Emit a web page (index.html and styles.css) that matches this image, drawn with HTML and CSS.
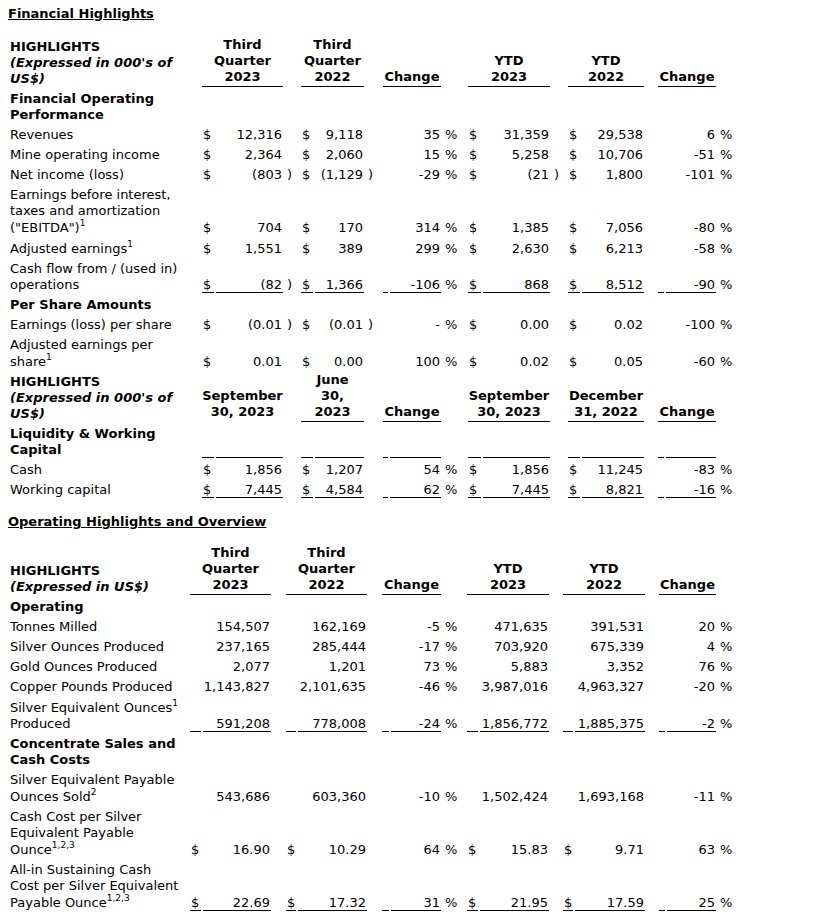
FILE: index.html
```html
<!DOCTYPE html>
<html>
<head>
<meta charset="utf-8">
<link rel="stylesheet" href="styles.css">
</head>
<body>
<div class="section-title">Financial Highlights</div>
<table class="fin t1">
<colgroup>
<col class="w192"><col class="w12"><col class="w67"><col class="w14"><col class="w12"><col class="w49"><col class="w15"><col class="w5"><col class="w51"><col class="w23"><col class="w13"><col class="w67"><col class="w14"><col class="w12"><col class="w62"><col class="w10"><col class="w6"><col class="w50"><col class="w17">
</colgroup>
<tr class="hd">
<td class="l b">HIGHLIGHTS<br><i>(Expressed in 000's of<br>US$)</i></td>
<td colspan="2" class="h u">Third<br>Quarter<br>2023</td><td></td>
<td colspan="2" class="h u">Third<br>Quarter<br>2022</td><td></td>
<td colspan="2" class="h u">Change</td><td></td>
<td colspan="2" class="h u">YTD<br>2023</td><td></td>
<td colspan="2" class="h u">YTD<br>2022</td><td></td>
<td colspan="2" class="h u">Change</td><td></td>
</tr>
<tr><td class="l b">Financial Operating<br>Performance</td><td colspan="18"></td></tr>
<tr><td class="l">Revenues</td><td class="s">$</td><td class="v">12,316</td><td></td><td class="s">$</td><td class="v">9,118</td><td></td><td></td><td class="v">35</td><td class="p">%</td><td class="s">$</td><td class="v">31,359</td><td></td><td class="s">$</td><td class="v">29,538</td><td></td><td></td><td class="v">6</td><td class="p">%</td></tr>
<tr><td class="l">Mine operating income</td><td class="s">$</td><td class="v">2,364</td><td></td><td class="s">$</td><td class="v">2,060</td><td></td><td></td><td class="v">15</td><td class="p">%</td><td class="s">$</td><td class="v">5,258</td><td></td><td class="s">$</td><td class="v">10,706</td><td></td><td></td><td class="v">-51</td><td class="p">%</td></tr>
<tr><td class="l">Net income (loss)</td><td class="s">$</td><td class="v">(803</td><td class="p">)</td><td class="s">$</td><td class="v">(1,129</td><td class="p">)</td><td></td><td class="v">-29</td><td class="p">%</td><td class="s">$</td><td class="v">(21</td><td class="p">)</td><td class="s">$</td><td class="v">1,800</td><td></td><td></td><td class="v">-101</td><td class="p">%</td></tr>
<tr><td class="l">Earnings before interest,<br>taxes and amortization<br>("EBITDA")<sup>1</sup></td><td class="s">$</td><td class="v">704</td><td></td><td class="s">$</td><td class="v">170</td><td></td><td></td><td class="v">314</td><td class="p">%</td><td class="s">$</td><td class="v">1,385</td><td></td><td class="s">$</td><td class="v">7,056</td><td></td><td></td><td class="v">-80</td><td class="p">%</td></tr>
<tr><td class="l">Adjusted earnings<sup>1</sup></td><td class="s">$</td><td class="v">1,551</td><td></td><td class="s">$</td><td class="v">389</td><td></td><td></td><td class="v">299</td><td class="p">%</td><td class="s">$</td><td class="v">2,630</td><td></td><td class="s">$</td><td class="v">6,213</td><td></td><td></td><td class="v">-58</td><td class="p">%</td></tr>
<tr><td class="l">Cash flow from / (used in)<br>operations</td><td class="s u">$</td><td class="v u">(82</td><td class="p">)</td><td class="s u">$</td><td class="v u">1,366</td><td></td><td class="s u"></td><td class="v u">-106</td><td class="p">%</td><td class="s u">$</td><td class="v u">868</td><td></td><td class="s u">$</td><td class="v u">8,512</td><td></td><td class="s u"></td><td class="v u">-90</td><td class="p">%</td></tr>
<tr><td class="l b">Per Share Amounts</td><td colspan="18"></td></tr>
<tr><td class="l">Earnings (loss) per share</td><td class="s">$</td><td class="v">(0.01</td><td class="p">)</td><td class="s">$</td><td class="v">(0.01</td><td class="p">)</td><td></td><td class="v">-</td><td class="p">%</td><td class="s">$</td><td class="v">0.00</td><td></td><td class="s">$</td><td class="v">0.02</td><td></td><td></td><td class="v">-100</td><td class="p">%</td></tr>
<tr><td class="l">Adjusted earnings per<br>share<sup>1</sup></td><td class="s">$</td><td class="v">0.01</td><td></td><td class="s">$</td><td class="v">0.00</td><td></td><td></td><td class="v">100</td><td class="p">%</td><td class="s">$</td><td class="v">0.02</td><td></td><td class="s">$</td><td class="v">0.05</td><td></td><td></td><td class="v">-60</td><td class="p">%</td></tr>
<tr class="hd">
<td class="l b">HIGHLIGHTS<br><i>(Expressed in 000's of<br>US$)</i></td>
<td colspan="2" class="h">September<br>30, 2023</td><td></td>
<td colspan="2" class="h u">June<br>30,<br>2023</td><td></td>
<td colspan="2" class="h u">Change</td><td></td>
<td colspan="2" class="h u">September<br>30, 2023</td><td></td>
<td colspan="2" class="h u">December<br>31, 2022</td><td></td>
<td colspan="2" class="h u">Change</td><td></td>
</tr>
<tr><td class="l b">Liquidity &amp; Working<br>Capital</td><td class="s u"></td><td class="v u"></td><td></td><td class="s u"></td><td class="v u"></td><td></td><td class="s u"></td><td class="v u"></td><td></td><td class="s u"></td><td class="v u"></td><td></td><td class="s u"></td><td class="v u"></td><td></td><td class="s u"></td><td class="v u"></td><td></td></tr>
<tr><td class="l">Cash</td><td class="s">$</td><td class="v">1,856</td><td></td><td class="s">$</td><td class="v">1,207</td><td></td><td></td><td class="v">54</td><td class="p">%</td><td class="s">$</td><td class="v">1,856</td><td></td><td class="s">$</td><td class="v">11,245</td><td></td><td></td><td class="v">-83</td><td class="p">%</td></tr>
<tr><td class="l">Working capital</td><td class="s u">$</td><td class="v u">7,445</td><td></td><td class="s u">$</td><td class="v u">4,584</td><td></td><td class="s u"></td><td class="v u">62</td><td class="p">%</td><td class="s u">$</td><td class="v u">7,445</td><td></td><td class="s u">$</td><td class="v u">8,821</td><td></td><td class="s u"></td><td class="v u">-16</td><td class="p">%</td></tr>
</table>

<div class="section-title second">Operating Highlights and Overview</div>
<table class="fin t2">
<colgroup>
<col class="w180"><col class="w11"><col class="w68"><col class="w11"><col class="w10"><col class="w69"><col class="w11"><col class="w7"><col class="w50"><col class="w22"><col class="w11"><col class="w69"><col class="w10"><col class="w10"><col class="w70"><col class="w10"><col class="w6"><col class="w49"><col class="w17">
</colgroup>
<tr class="hd">
<td class="l b">HIGHLIGHTS<br><i>(Expressed in US$)</i></td>
<td colspan="2" class="h u">Third<br>Quarter<br>2023</td><td></td>
<td colspan="2" class="h u">Third<br>Quarter<br>2022</td><td></td>
<td colspan="2" class="h u">Change</td><td></td>
<td colspan="2" class="h u">YTD<br>2023</td><td></td>
<td colspan="2" class="h u">YTD<br>2022</td><td></td>
<td colspan="2" class="h u">Change</td><td></td>
</tr>
<tr><td class="l b">Operating</td><td colspan="18"></td></tr>
<tr><td class="l">Tonnes Milled</td><td></td><td class="v">154,507</td><td></td><td></td><td class="v">162,169</td><td></td><td></td><td class="v">-5</td><td class="p">%</td><td></td><td class="v">471,635</td><td></td><td></td><td class="v">391,531</td><td></td><td></td><td class="v">20</td><td class="p">%</td></tr>
<tr><td class="l">Silver Ounces Produced</td><td></td><td class="v">237,165</td><td></td><td></td><td class="v">285,444</td><td></td><td></td><td class="v">-17</td><td class="p">%</td><td></td><td class="v">703,920</td><td></td><td></td><td class="v">675,339</td><td></td><td></td><td class="v">4</td><td class="p">%</td></tr>
<tr><td class="l">Gold Ounces Produced</td><td></td><td class="v">2,077</td><td></td><td></td><td class="v">1,201</td><td></td><td></td><td class="v">73</td><td class="p">%</td><td></td><td class="v">5,883</td><td></td><td></td><td class="v">3,352</td><td></td><td></td><td class="v">76</td><td class="p">%</td></tr>
<tr><td class="l">Copper Pounds Produced</td><td></td><td class="v">1,143,827</td><td></td><td></td><td class="v">2,101,635</td><td></td><td></td><td class="v">-46</td><td class="p">%</td><td></td><td class="v">3,987,016</td><td></td><td></td><td class="v">4,963,327</td><td></td><td></td><td class="v">-20</td><td class="p">%</td></tr>
<tr><td class="l">Silver Equivalent Ounces<sup>1</sup><br>Produced</td><td class="s u"></td><td class="v u">591,208</td><td></td><td class="s u"></td><td class="v u">778,008</td><td></td><td class="s u"></td><td class="v u">-24</td><td class="p">%</td><td class="s u"></td><td class="v u">1,856,772</td><td></td><td class="s u"></td><td class="v u">1,885,375</td><td></td><td class="s u"></td><td class="v u">-2</td><td class="p">%</td></tr>
<tr><td class="l b">Concentrate Sales and<br>Cash Costs</td><td colspan="18"></td></tr>
<tr><td class="l">Silver Equivalent Payable<br>Ounces Sold<sup>2</sup></td><td></td><td class="v">543,686</td><td></td><td></td><td class="v">603,360</td><td></td><td></td><td class="v">-10</td><td class="p">%</td><td></td><td class="v">1,502,424</td><td></td><td></td><td class="v">1,693,168</td><td></td><td></td><td class="v">-11</td><td class="p">%</td></tr>
<tr><td class="l">Cash Cost per Silver<br>Equivalent Payable<br>Ounce<sup>1,2,3</sup></td><td class="s">$</td><td class="v">16.90</td><td></td><td class="s">$</td><td class="v">10.29</td><td></td><td></td><td class="v">64</td><td class="p">%</td><td class="s">$</td><td class="v">15.83</td><td></td><td class="s">$</td><td class="v">9.71</td><td></td><td></td><td class="v">63</td><td class="p">%</td></tr>
<tr><td class="l">All-in Sustaining Cash<br>Cost per Silver Equivalent<br>Payable Ounce<sup>1,2,3</sup></td><td class="s u">$</td><td class="v u">22.69</td><td></td><td class="s u">$</td><td class="v u">17.32</td><td></td><td class="s u"></td><td class="v u">31</td><td class="p">%</td><td class="s u">$</td><td class="v u">21.95</td><td></td><td class="s u">$</td><td class="v u">17.59</td><td></td><td class="s u"></td><td class="v u">25</td><td class="p">%</td></tr>
</table>
</body>
</html>
```
FILE: styles.css
```css
html, body {
  background: #fff;
}
body {
  margin: 0 8px;
  font-family: "DejaVu Sans", Verdana, sans-serif;
  font-size: 13px;
  line-height: 16px;
  color: #000;
}
.section-title {
  font-weight: bold;
  text-decoration: underline;
  padding-top: 6px;
  margin-bottom: 15px;
}
.section-title.second {
  margin-top: 8px;
  margin-bottom: 15px;
}
.fin {
  table-layout: fixed;
  border-collapse: separate;
  border-spacing: 2px 0;
  margin-left: -2px;
}
.fin td {
  padding: 2px 0;
  vertical-align: bottom;
  white-space: nowrap;
  box-sizing: border-box;
}
.fin td.l {
  padding-left: 2px;
  text-align: left;
}
.fin td.b {
  font-weight: bold;
}
.fin td.b i {
  font-style: italic;
}
.fin td.s {
  text-align: left;
  padding-left: 1px;
}
.fin td.v {
  text-align: right;
  padding-right: 1px;
}
.fin td.p {
  text-align: left;
  padding-left: 2px;
}
.fin td.u {
  background-image: linear-gradient(#000, #000);
  background-repeat: no-repeat;
  background-size: 100% 1px;
  background-position: left 0 bottom 2px;
}
.fin td.h {
  font-weight: bold;
  text-align: center;
  padding-top: 0;
  padding-bottom: 4px;
}
.fin sup {
  font-size: 9px;
  line-height: 8px;
  vertical-align: 6px;
}
.w192 { width: 192px; }
.w180 { width: 180px; }
.w70 { width: 70px; }
.w69 { width: 69px; }
.w68 { width: 68px; }
.w67 { width: 67px; }
.w62 { width: 62px; }
.w51 { width: 51px; }
.w50 { width: 50px; }
.w49 { width: 49px; }
.w23 { width: 23px; }
.w22 { width: 22px; }
.w17 { width: 17px; }
.w15 { width: 15px; }
.w14 { width: 14px; }
.w13 { width: 13px; }
.w12 { width: 12px; }
.w11 { width: 11px; }
.w10 { width: 10px; }
.w7 { width: 7px; }
.w6 { width: 6px; }
.w5 { width: 5px; }
```
